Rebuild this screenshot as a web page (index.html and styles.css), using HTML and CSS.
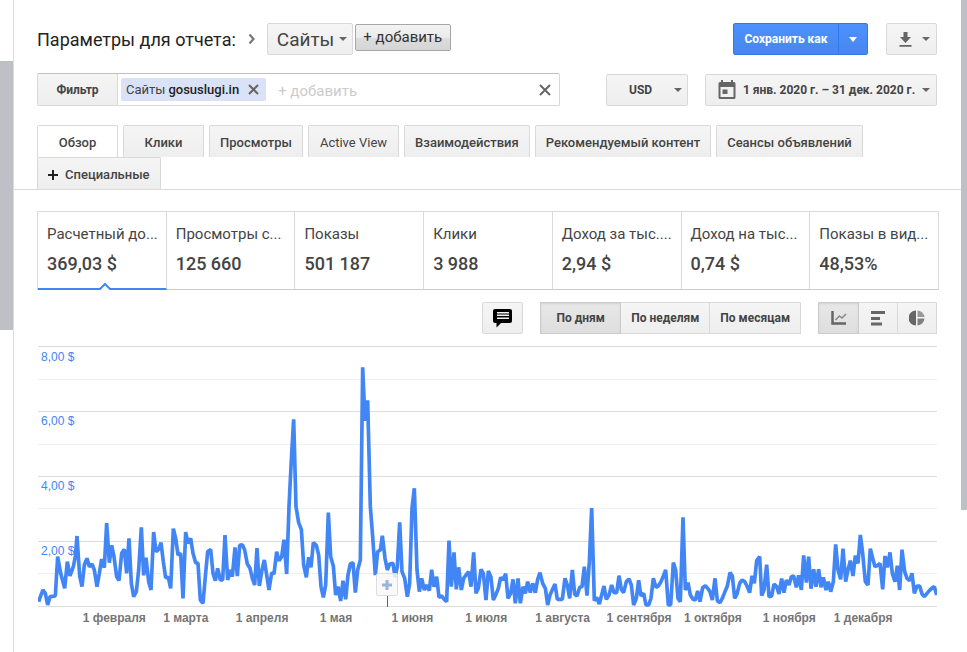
FILE: index.html
```html
<!DOCTYPE html>
<html lang="ru">

<head>
    <meta charset="UTF-8">
    <meta name="viewport" content="width=device-width, initial-scale=1.0">
    <title>Параметры для отчета</title>
    <link rel="stylesheet" href="styles.css">
</head>

<body>
    <div class="rail rail-left"><div class="rail-thumb"></div></div>

    <main class="page">
        <header class="row header">
            <h1 class="title">Параметры для отчета:</h1>
            <svg class="chevron" width="8" height="12" viewBox="0 0 8 12"><path d="M1.5 1.5L5.5 6l-4 4.5" fill="none" stroke="#777" stroke-width="2.2"/></svg>
            <span class="select-wrap site">
                <select class="btn" aria-label="Группировка"><option>Сайты</option></select>
                <svg class="arrow" width="8" height="4" viewBox="0 0 8 4"><path d="M0 0h8L4 4z"/></svg>
            </span>
            <button class="add-button">+ добавить</button>
            <div class="split">
                <button class="save">Сохранить как</button>
                <button class="save-more" aria-label="Другие варианты"><svg width="8" height="5" viewBox="0 0 8 5"><path d="M0 0h8L4 5z"/></svg></button>
            </div>
            <button class="btn download" aria-label="Скачать">
                <svg width="13" height="15" viewBox="0 0 13 15"><path d="M4.500 0h4v5h3.500l-5.500 6L1 5h3.500z M.5 13h12v1.800H.5z"/></svg>
                <svg width="8" height="4" viewBox="0 0 8 4"><path d="M0 0h8L4 4z"/></svg>
            </button>
        </header>

        <div class="row filters">
            <div class="filter-box">
                <label class="filter-label" for="filter">Фильтр</label>
                <span class="chip">Сайты <b>gosuslugi.in</b>
                    <button class="clear" aria-label="Удалить"><svg width="11" height="11" viewBox="0 0 11 11"><path d="M1 1l9 9M10 1l-9 9"/></svg></button>
                </span>
                <input class="filter-input" id="filter" type="text" placeholder="+ добавить">
                <button class="clear clear-all" aria-label="Очистить"><svg width="12" height="12" viewBox="0 0 12 12"><path d="M1 1l10 10M11 1L1 11"/></svg></button>
            </div>
            <span class="select-wrap currency">
                <select class="btn" aria-label="Валюта"><option>USD</option></select>
                <svg class="arrow" width="8" height="4" viewBox="0 0 8 4"><path d="M0 0h8L4 4z"/></svg>
            </span>
            <button class="btn dates">
                <svg width="18" height="20" viewBox="0 0 18 20"><path fill-rule="evenodd" d="M3 0h2v2h8V0h2v2h1q1.500 0 1.500 1.500v14q0 1.500-1.500 1.500H2Q.5 19 .5 17.500v-14Q.5 2 2 2h1zM2.500 7v10h13V7z"/><path d="M4.500 9.500h5v4.500h-5z"/></svg>
                <span>1 янв. 2020 г. – 31 дек. 2020 г.</span>
                <svg width="8" height="4" viewBox="0 0 8 4"><path d="M0 0h8L4 4z"/></svg>
            </button>
        </div>

        <nav class="tabs">
            <button class="tab active">Обзор</button>
            <button class="tab">Клики</button>
            <button class="tab">Просмотры</button>
            <button class="tab light">Active View</button>
            <button class="tab">Взаимодействия</button>
            <button class="tab">Рекомендуемый контент</button>
            <button class="tab">Сеансы объявлений</button>
            <button class="tab special"><svg width="10" height="10" viewBox="0 0 10 10"><path d="M4 0h2v4h4v2H6v4H4V6H0V4h4z"/></svg>Специальные</button>
        </nav>

        <section class="metrics">
            <button class="metric selected"><span class="name">Расчетный до...</span><span class="value">369,03 $</span>
                <svg class="pointer" width="14" height="8" viewBox="0 0 14 8"><path d="M1 8l6-6 6 6" fill="#fff" stroke="#4285f4" stroke-width="2"/></svg></button>
            <button class="metric"><span class="name">Просмотры с...</span><span class="value">125 660</span></button>
            <button class="metric"><span class="name">Показы</span><span class="value">501 187</span></button>
            <button class="metric"><span class="name">Клики</span><span class="value">3 988</span></button>
            <button class="metric"><span class="name">Доход за тыс....</span><span class="value">2,94 $</span></button>
            <button class="metric"><span class="name">Доход на тыс...</span><span class="value">0,74 $</span></button>
            <button class="metric"><span class="name">Показы в вид...</span><span class="value">48,53%</span></button>
        </section>

        <div class="row toolbar">
            <button class="btn note" aria-label="Примечания"><svg width="20" height="19" viewBox="0 0 20 19"><path fill-rule="evenodd" d="M2 0h15q2 0 2 2v10q0 2-2 2H8l-4.500 4.500V14H2q-2 0-2-2V2q0-2 2-2zM4 3v1.500h12V3zM4 5.500V7h12V5.500zM4 8.500V10h12V8.500z"/></svg></button>
            <div class="group period">
                <button class="btn on">По дням</button>
                <button class="btn">По неделям</button>
                <button class="btn">По месяцам</button>
            </div>
            <div class="group views">
                <button class="btn on" aria-label="Линейный график"><svg width="16" height="16" viewBox="0 0 16 16"><path d="M1.500 1v12.500H15" fill="none" stroke="#666" stroke-width="2.500"/><path d="M4.500 10l4-4 2.500 2L15 4" fill="none" stroke="#888" stroke-width="1.500"/></svg></button>
                <button class="btn" aria-label="Столбцы"><svg width="16" height="16" viewBox="0 0 16 16"><path d="M1 1h14v3H1zM1 7h9v3H1zM1 12.500h11v3H1z"/></svg></button>
                <button class="btn" aria-label="Круговая диаграмма"><svg width="16" height="16" viewBox="0 0 16 16"><path d="M7 .5a7.500 7.500 0 0 0 0 15z"/><path d="M8.500.5a7.500 7.500 0 0 1 7 6.500h-7z" fill="#999"/><path d="M8.500 8.500h7a7.500 7.500 0 0 1-7 7z" fill="#808080"/></svg></button>
            </div>
        </div>

        <section class="chart">
            <svg class="plot" width="100%" height="284">
                <g class="grid" id="grid"></g>
                <g class="y-labels">
                    <text x="3" y="15">8,00 $</text>
                    <text x="3" y="79">6,00 $</text>
                    <text x="3" y="144">4,00 $</text>
                    <text x="3" y="209">2,00 $</text>
                </g>
                <svg width="100%" height="262" viewBox="0 0 2697 786" preserveAspectRatio="none">
                    <polyline class="line" id="line"/>
                </svg>
                <g class="x-labels" id="months"></g>
            </svg>
            <button class="marker" aria-label="Добавить примечание"><svg width="10" height="10" viewBox="0 0 10 10"><path d="M3.500 0h3v3.500H10v3H6.500V10h-3V6.500H0v-3h3.500z"/></svg></button>
        </section>
    </main>

    <div class="rail rail-right"><div class="rail-thumb"></div></div>

    <script src="script.js"></script>
</body>

</html>
```
FILE: styles.css
```css
* {
    box-sizing: border-box;
}

body {
    margin: 0;
    min-height: 100vh;
    display: flex;
    background: #fff;
    color: #444;
    font-family: Roboto, "Liberation Sans", sans-serif;
    font-size: 12px;
}

button,
select,
input {
    font: inherit;
    color: inherit;
    margin: 0;
    padding: 0;
}

svg {
    display: block;
    flex: none;
    fill: #666;
}

/* scroll rails on both sides */
.rail {
    flex: none;
}

.rail-left {
    width: 14px;
    padding-top: 61px;
    border-right: 1px solid #dadce0;
}

.rail-left .rail-thumb {
    height: 269px;
    background: #bdc1c6;
}

.rail-right {
    width: 6px;
}

.rail-right .rail-thumb {
    height: 510px;
    background: #bdc1c6;
}

.page {
    flex: 1;
    min-width: 0;
    padding-top: 23px;
}

.row {
    display: flex;
    align-items: center;
    padding: 0 24px 0 23px;
}

.btn {
    height: 32px;
    border: 1px solid #d9d9d9;
    border-radius: 2px;
    background: linear-gradient(#f5f5f5, #eee);
    font-weight: bold;
}

.select-wrap {
    position: relative;
    flex: none;
}

.select-wrap select {
    appearance: none;
    width: 100%;
}

.arrow {
    position: absolute;
    right: 6px;
    top: 14px;
    pointer-events: none;
}

/* header */
.title {
    margin: 0;
    color: #222;
    font-size: 18px;
    font-weight: normal;
}

.chevron {
    margin: 0 11px 0 12px;
}

.site {
    width: 86px;
}

.site select {
    padding-left: 9px;
    font-size: 19px;
    font-weight: normal;
}

.add-button {
    width: 96px;
    height: 27px;
    margin: 0 auto 4px 2px;
    border: 1px solid #a6a6a6;
    border-radius: 2px;
    background: linear-gradient(#f2f2f2, #ebebeb 50%, #ddd 50%, #d5d5d5);
    color: #333;
    font-size: 15px;
}

.split {
    display: flex;
    margin-right: 18px;
}

.save,
.save-more {
    height: 32px;
    border: 1px solid #3079ed;
    background: linear-gradient(#4d90fe, #4787ed);
    color: #fff;
    font-weight: bold;
}

.save {
    width: 106px;
    border-radius: 2px 0 0 2px;
}

.save-more {
    width: 30px;
    margin-left: -1px;
    border-radius: 0 2px 2px 0;
    padding-left: 10px;
}

.save-more svg {
    fill: #fff;
}

.download {
    display: flex;
    align-items: center;
    justify-content: space-between;
    width: 51px;
    padding: 0 6px 0 12px;
}

/* filters */
.filters {
    margin-top: 18px;
}

.filter-box {
    display: flex;
    align-items: center;
    flex: 1;
    min-width: 0;
    height: 33px;
    margin-right: 46px;
    border: 1px solid #d9d9d9;
    border-top-color: #c0c0c0;
    border-radius: 2px;
}

.filter-label {
    width: 80px;
    padding-top: 2px;
    line-height: 29px;
    border-right: 1px solid #d9d9d9;
    background: linear-gradient(#f5f5f5, #eee);
    font-weight: bold;
    text-align: center;
}

.chip {
    display: flex;
    align-items: center;
    gap: 3px;
    height: 23px;
    margin-left: 3px;
    padding: 0 7px 0 5px;
    border-radius: 2px;
    background: #d9e2f7;
    font-size: 13px;
    white-space: nowrap;
}

.chip b {
    color: #222;
    font-weight: 500;
}

.clear {
    border: 0;
    background: none;
}

.chip .clear {
    margin-left: 6px;
}

.clear path {
    fill: none;
    stroke: #666;
    stroke-width: 2;
}

.clear-all {
    margin-right: 8px;
}

.filter-input {
    flex: 1;
    min-width: 0;
    margin-left: 12px;
    padding-top: 2px;
    border: 0;
    outline: 0;
    background: none;
    font-size: 15px;
}

.filter-input::placeholder {
    color: #ccc;
}

.currency {
    width: 82px;
    margin-right: 17px;
}

.currency select {
    padding-left: 22px;
}

.dates {
    display: flex;
    align-items: center;
    justify-content: space-between;
    width: 232px;
    padding: 0 6px 0 12px;
}

/* tabs */
.tabs {
    display: flex;
    flex-wrap: wrap;
    column-gap: 5px;
    margin-top: 19px;
    padding: 0 24px 0 23px;
    border-bottom: 1px solid #dadada;
}

.tab {
    min-width: 81px;
    height: 32px;
    padding: 2px 10px 0;
    border: 1px solid #d9d9d9;
    border-bottom: 0;
    border-radius: 2px 2px 0 0;
    background: linear-gradient(#f5f5f5, #eee);
    font-size: 13px;
    font-weight: 500;
}

.tab.active {
    background: #fff;
}

.tab.light {
    padding: 2px 11px 0;
    font-weight: normal;
}

.tab.special {
    display: flex;
    align-items: center;
    gap: 7px;
}

.tab.special svg {
    fill: #222;
}

/* metric cards */
.metrics {
    display: grid;
    grid-template-columns: repeat(7, 1fr);
    margin: 21px 22px 0 23px;
    border: solid #dadada;
    border-width: 1px 0 0 1px;
}

.metric {
    position: relative;
    display: flex;
    flex-direction: column;
    gap: 8px;
    min-width: 0;
    height: 78px;
    padding: 12px 0 0 9px;
    border: 0;
    border-right: 1px solid #dadada;
    border-bottom: 1px solid #ccc;
    background: #fff;
    text-align: left;
}

.metric.selected {
    border-bottom: 2px solid #4285f4;
}

.name {
    font-size: 15px;
    line-height: 20px;
    white-space: nowrap;
}

.value {
    font-size: 18px;
    font-weight: 500;
    line-height: 24px;
}

.pointer {
    position: absolute;
    left: calc(50% - 4px);
    bottom: -2px;
}

/* toolbar */
.toolbar {
    justify-content: flex-end;
    margin-top: 12px;
}

.note {
    display: flex;
    align-items: center;
    justify-content: center;
    width: 41px;
}

.note svg {
    fill: #000;
}

.group {
    display: flex;
    margin-left: 17px;
}

.group .btn {
    display: flex;
    align-items: center;
    justify-content: center;
    padding: 0 10px;
    border-radius: 0;
}

.group .btn + .btn {
    border-left: 0;
}

.group .on {
    background: linear-gradient(#e8e8e8, #dedede);
    border-color: #ccc;
    box-shadow: inset 0 1px 2px rgba(0, 0, 0, 0.1);
}

.group.period .on {
    width: 81px;
}

.views .btn {
    width: 39px;
}

.views .on {
    width: 41px;
}

/* chart */
.chart {
    position: relative;
    margin: 12px 24px 0;
}

.plot {
    overflow: visible;
}

.grid line {
    stroke: #ddd;
    shape-rendering: crispEdges;
}

.grid .minor {
    stroke: #f0f0f0;
}

.line {
    fill: none;
    stroke: #4285f4;
    stroke-width: 11;
    stroke-linejoin: bevel;
}

.y-labels {
    fill: #4285f4;
    font-family: "Liberation Sans", sans-serif;
    font-size: 12px;
}

.x-labels {
    fill: #757575;
    font-family: "Liberation Sans", sans-serif;
    font-size: 12px;
    font-weight: bold;
    text-anchor: middle;
}

.marker {
    position: absolute;
    left: calc(39% - 13px);
    top: 227px;
    display: flex;
    align-items: center;
    justify-content: center;
    width: 22px;
    height: 23px;
    border: 1px solid #ddd;
    border-radius: 2px;
    background: rgba(248, 248, 248, 0.85);
}

.marker svg {
    fill: #9ab5dc;
}

.marker::after {
    content: "";
    position: absolute;
    left: 10px;
    top: 22px;
    width: 1px;
    height: 11px;
    background: #666;
}
```
FILE: script.js
```js
const NS = 'http://www.w3.org/2000/svg';

// a function to add an svg element
function add(parent, name, attrs, text) {
    const el = document.createElementNS(NS, name);
    for (const key in attrs) el.setAttribute(key, attrs[key]);
    if (text) el.textContent = text;
    document.getElementById(parent).appendChild(el);
}

// horizontal lines, one per dollar
[0, 33, 65, 98, 130, 162, 195, 227, 260].forEach((y, i) => {
    add('grid', 'line', { x1: 0, x2: '100%', y1: y + 0.5, y2: y + 0.5, class: i % 2 ? 'minor' : 'major' });
});

// day of the year on which each month starts
const months = [
    [31, '1 февраля'], [60, '1 марта'], [91, '1 апреля'], [121, '1 мая'],
    [152, '1 июня'], [182, '1 июля'], [213, '1 августа'], [244, '1 сентября'],
    [274, '1 октября'], [305, '1 ноября'], [335, '1 декабря']
];
months.forEach(([day, name]) => {
    add('months', 'text', { x: day / 365 * 100 + '%', y: 276 }, name);
});

// daily revenue, every part has its own origin
const parts = [
    { x: -24, y: -18, points: '26,785 33,765 39,750 46,760 53,795 60,770 76,768 83,650 92,700 104,745 112,665 120,708 130,680 136,650 141,588 149,708 156,740 163,675 171,655 178,680 186,672 193,690 201,740 208,700 215,657 223,683 230,549 238,668 245,616 252,650 260,710 267,722 275,640 283,628 290,700 297,595 304,730 311,770 319,755 326,690 334,562 341,706 348,653 356,725 363,750 371,576 378,635 386,628 393,608 400,665 407,713 415,712 422,745 430,566 437,595 444,645 452,640 459,775 467,576 474,610 482,595 489,640 497,668 504,670 511,780 519,790 526,710 533,635 542,628 549,700 556,722 563,685 571,720 578,720 585,585 593,720 600,690 607,710 615,622 622,708 629,616 637,614 644,630 652,672 660,685 667,715 674,735 681,624' },
    { x: 636, y: -18, points: '28,738 36,690 43,660 50,705 57,750 65,698 72,702 80,635 87,662 95,650 102,599 110,702 117,500 124,360 131,238 138,500 146,548 154,568 161,675 169,712 176,652 183,682 190,608 199,616 206,645 213,740 220,772 227,735 235,518 242,650 250,678 257,765 264,740 272,783 279,722 287,778 294,705 301,672 309,668 316,758 323,690 331,660 338,82 345,242 353,181 361,500 368,590 376,705 383,635 391,630 397,587 405,655 412,690 419,672 429,670 435,712 442,680 449,547 456,695 464,715 472,770 479,730 486,505 493,445 501,690 508,755 515,715 523,750 530,735 538,752 545,689 552,740 560,710 567,772 575,768 583,778 590,785 597,602 604,740 612,637 619,748 626,682 634,750 641,715 648,705 656,695 663,740 671,637' },
    { x: 1296, y: 432, points: '18,310 25,295 33,238 40,250 48,330 55,243 63,262 70,330 77,315 85,295 92,262 99,270 107,251 114,325 122,310 129,268 136,340 144,265 151,340 159,290 166,310 173,275 181,308 188,280 196,308 203,268 210,248 218,280 226,295 233,345 240,315 248,297 255,282 262,328 277,328 285,265 292,285 299,325 307,240 314,312 321,318 329,292 336,290 343,230 351,317 358,215 365,54 373,332 380,322 388,342 395,315 402,288 409,328 417,315 425,285 432,308 440,308 447,257 454,298 461,308 469,275 477,267 484,285 491,345 499,325 506,271 513,318 521,310 528,345 536,345 543,325 550,265 558,292 565,288 573,275 580,258 587,240 595,345 602,345 610,218 617,240 624,325 631,335 639,82 646,300 654,278 661,315 669,328 676,330 683,303 690,335 698,293 706,287 713,295 720,305' },
    { x: 1986, y: 432, points: '37,330 45,265 52,332 60,338 67,325 75,305 82,288 90,248 97,258 104,325 111,312 119,280 126,270 134,275 141,288 149,308 156,257 163,280 170,212 179,200 185,317 192,300 200,224 207,320 215,318 222,282 230,290 237,312 245,266 252,308 259,270 267,285 274,260 281,258 289,292 296,256 304,300 311,196 319,278 326,200 333,296 341,238 348,290 356,238 363,292 370,262 378,300 385,275 392,305 400,275 407,163 414,240 422,268 429,176 437,275 444,240 451,212 459,258 466,197 474,220 481,135 488,190 496,275 504,285 511,176 518,205 525,230 533,226 540,220 548,298 555,198 562,232 570,187 577,250 585,275 592,227 599,300 606,179 614,245 621,265 629,272 636,250 643,310 651,288 659,288 666,312 673,320 681,310 688,302 695,295 703,290 710,315' }
];
const line = [];
parts.forEach(part => {
    part.points.split(' ').forEach(p => {
        const [x, y] = p.split(',').map(Number);
        line.push((x + part.x) + ',' + (y + part.y));
    });
});
document.getElementById('line').setAttribute('points', line.join(' '));
```
